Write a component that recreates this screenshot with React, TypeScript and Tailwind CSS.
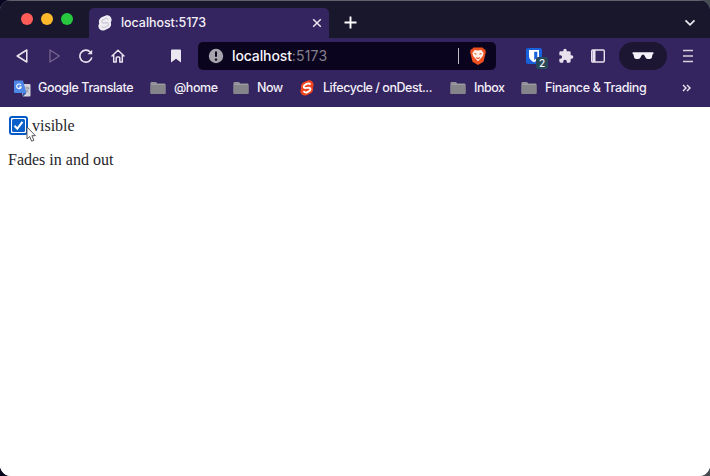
import React from 'react';

const ui = "font-['Inter','Liberation_Sans',sans-serif] font-medium";

function Svelte({ bg, fg, line }: { bg: string; fg: string; line: number }) {
  return (
    <svg width="14" height="16" viewBox="0 0 14 16" className="shrink-0">
      <path d="M4.2 2.1 7.8.6C10.6-.4 13.8 1.900 13.600 5c0 1-.4 1.700-.8 2.400.9 2.500-.1 5-2.500 6.200L6.600 15.200C3.600 16.600.2 14.300.4 11c0-1 .3-1.800.8-2.500C.2 5.900 1.500 3.300 4.200 2.100Z" fill={bg} />
      <path d="M10.400 4.700C9.600 3.100 7.900 3.200 6.800 3.900L4.500 5.300C3.200 6.200 3.500 8 5.100 8.100l3.600-.5c2 .1 2.300 2.100.9 3.100L7.400 12.100c-1.300.8-3.100.5-3.700-1.100" fill="none" stroke={fg} strokeWidth={line} />
    </svg>
  );
}

function Folder() {
  return (
    <svg width="16" height="14" viewBox="0 0 16 14" className="shrink-0">
      <path d="M.5 2Q.5 1 1.500 1H6l1.300 1.500h7.200q1 0 1 1v8.500q0 1-1 1h-13q-1 0-1-1Z" fill="#929198" />
      <path d="M.5 4h15v8q0 1-1 1h-13q-1 0-1-1Z" fill="#85848a" />
      <path d="M1 3.500h14" stroke="#a5a4aa" strokeWidth=".6" />
    </svg>
  );
}

function TabStrip() {
  return (
    <div className="flex h-[38px] border-t border-[#62606d] bg-[#19172b]">
      <div className="ml-[21px] mt-3 flex w-[68px] gap-2">
        <span className="size-3 rounded-full bg-[#ff5c58]" />
        <span className="size-3 rounded-full bg-[#fdb92c]" />
        <span className="size-3 rounded-full bg-[#27c840]" />
      </div>
      <div className="mt-[7px] flex h-[30px] w-[240px] items-center rounded-t-[5px] bg-[#34245f] pl-[9px] pr-[7px]">
        <Svelte bg="#efedf3" fg="#cbc7d3" line={1.1} />
        <span className="ml-[9px] w-[100px] whitespace-nowrap text-[12.5px] leading-4 tracking-[-0.06px] text-[#f2eff8]">localhost:5173</span>
        <svg className="ml-auto" width="10" height="10" viewBox="0 0 10 10" stroke="#e9e6f0" strokeWidth="1.500">
          <path d="m1.200 1.200 7.600 7.600m0-7.600L1.200 8.800" />
        </svg>
      </div>
      <svg className="ml-[15px] mt-[15px]" width="13" height="13" viewBox="0 0 13 13" stroke="#fff" strokeWidth="1.900">
        <path d="M6.500.5v12M.5 6.500h12" />
      </svg>
      <svg className="ml-auto mr-[14px] mt-[18px]" width="12" height="8" viewBox="0 0 12 8" fill="none" stroke="#eeeaf4" strokeWidth="1.700">
        <path d="m1.500 1.300 4.500 4.500 4.500-4.500" />
      </svg>
    </div>
  );
}

function Toolbar() {
  return (
    <div className="flex h-9 items-center">
      <svg className="ml-[16px]" width="12" height="14" viewBox="0 0 12 14" fill="none" stroke="#e9e5ef" strokeWidth="1.500" strokeLinejoin="round">
        <path d="M10.800 1v12L1.200 7Z" />
      </svg>
      <svg className="ml-[21px]" width="12" height="14" viewBox="0 0 12 14" fill="none" stroke="#746790" strokeWidth="1.300" strokeLinejoin="round">
        <path d="M1 1v12l9.300-6Z" />
      </svg>
      <svg className="ml-[18px]" width="14" height="14" viewBox="0 0 14 14" fill="none" stroke="#e9e5ef" strokeWidth="1.600">
        <path d="M12.800 8.300A6 6 0 1 1 11.300 3" />
        <path d="M8.500 5.200h4.700V.8Z" fill="#e9e5ef" stroke="none" />
      </svg>
      <svg className="ml-[18px]" width="14" height="14" viewBox="0 0 14 14" fill="none" stroke="#e9e5ef" strokeWidth="1.500" strokeLinejoin="round" strokeLinecap="round">
        <path d="m1 7 6-5.800L13 7M2.700 6v7h2.500V9q0-1 1-1h1.600q1 0 1 1v4h2.500V6" />
      </svg>
      <svg className="ml-[46px]" width="10" height="14" viewBox="0 0 10 14" fill="#ece8f2">
        <path d="M0 1.500Q0 .5 1 .5h8q1 0 1 1v12L5 9.800 0 13.500Z" />
      </svg>
      <div className="ml-[17px] flex h-[28px] w-[298px] items-center rounded-[5px] bg-[#0b041e] pl-[10px] pr-[9px]">
        <svg width="16" height="16" viewBox="0 0 16 16">
          <circle cx="8" cy="8" r="7.200" fill="#a6a4ad" />
          <path d="M8 3.500v5.300" stroke="#0b041e" strokeWidth="2" />
          <circle cx="8" cy="11.600" r="1.200" fill="#0b041e" />
        </svg>
        <span className="ml-2 w-[120px] whitespace-nowrap text-[14px] leading-5 tracking-[-0.12px] text-[#f7f5fc]">
          localhost<span className="font-normal tracking-[0.2px] text-[#85808f]">:5173</span>
        </span>
        <span className="ml-auto mr-[10px] h-4 w-px bg-[#bfbcc7]" />
        <svg width="18" height="20" viewBox="0 0 18 20">
          <path d="M4.500 1.500h9l1.300 1.500 1.500.5.500 3-.6 2.300-1.700 7L9 19l-5.500-3.200-1.700-7-.6-2.300.5-3L3.200 3Z" fill="#f05020" />
          <path d="M5.800 4 9 4.400l3.200-.4 2.400 3-.8 3-2.400 2.800L9 15.200l-2.400-2.400L4.200 10l-.8-3Z" fill="#fff2eb" />
          <path d="m5.500 7.600 2 .7M12.500 7.600l-2 .7M7.200 11.500 9 12.600l1.800-1.100" stroke="#e95127" strokeWidth="1.100" fill="none" />
        </svg>
      </div>
      <div className="relative ml-[30px] h-4 w-4">
        <svg width="16" height="16" viewBox="0 0 16 16">
          <rect width="16" height="16" rx="2" fill="#1761dc" />
          <path d="M3 2h10v6.500c0 2.500-2.500 4.500-5 5.700-2.500-1.200-5-3.200-5-5.700Z" fill="#fff" />
          <path d="M8.200 3.700h3.100v4.800c0 1.400-1.600 2.700-3.100 3.600Z" fill="#1761dc" />
        </svg>
        <span className="absolute left-[10px] top-[9px] flex h-3 w-3 items-center justify-center rounded-[2px] bg-[#28495a] text-[10px] leading-none text-white">2</span>
      </div>
      <svg className="ml-4" width="16" height="16" viewBox="0 0 24 24" fill="#e7e2ed">
        <path d="M20.500 11H19V7a2 2 0 0 0-2-2h-4V3.500a2.500 2.500 0 0 0-5 0V5H4a2 2 0 0 0-2 2v3.800h1.500a2.700 2.700 0 0 1 0 5.400H2V20a2 2 0 0 0 2 2h3.800v-1.500a2.700 2.700 0 0 1 5.400 0V22H17a2 2 0 0 0 2-2v-4h1.500a2.500 2.500 0 0 0 0-5Z" />
      </svg>
      <svg className="ml-[17px]" width="14" height="14" viewBox="0 0 14 14" fill="none" stroke="#e7e2ed">
        <rect x=".7" y="1" width="12.600" height="12" rx="1" strokeWidth="1.400" />
        <path d="M3 1v12" strokeWidth="3" />
      </svg>
      <div className="ml-[14px] flex h-[28px] w-12 items-center justify-center rounded-full bg-[#1d1633]">
        <svg width="22" height="10" viewBox="0 0 22 10" fill="#f5f1fa">
          <path d="M.7 1.200h20.600l.2 1.500-1 .7-.7 3.300c-.4 1.700-5 1.900-6 .4L12 3.700h-2L8.200 7.100c-1 1.500-5.600 1.300-6-.4l-.7-3.300-1-.7Z" />
        </svg>
      </div>
      <svg className="ml-[15px]" width="12" height="14" viewBox="0 0 12 14" stroke="#d7d2df" strokeWidth="1.700">
        <path d="M1 1.500h10M1 7h10M1 12.500h10" />
      </svg>
    </div>
  );
}

function Label({ children, className }: { children: React.ReactNode; className: string }) {
  return <span className={`shrink-0 whitespace-nowrap text-[12.5px] leading-4 text-[#f2eef8] ${className}`}>{children}</span>;
}

function Bookmarks() {
  return (
    <div className="flex h-[33px] items-start pt-[6px]">
      <div className="flex h-4 w-full items-center">
        <svg className="ml-[14px] shrink-0" width="17" height="17" viewBox="0 0 17 17">
          <path d="M6 4h9.500q1 0 1 1v10.500q0 1-1 1H9Z" fill="#d5d4dc" />
          <path d="M1 .5h8L12.500 13H1q-1 0-1-1V1.500q0-1 1-1Z" fill="#4d88e9" />
          <path d="M7 5.200A2.300 2.300 0 1 0 7.200 7H5" stroke="#fff" strokeWidth="1.100" fill="none" />
          <path d="M11 8h4.500M13 6.700V8m1.500 0c-.4 2-1.500 3.200-2.500 4m0-2.500c.8 1.300 1.600 2.100 2.800 2.800" stroke="#8b8a98" strokeWidth=".8" fill="none" />
          <path d="m9 13 3.500 0L9 16.500Z" fill="#3458a8" />
        </svg>
        <Label className="ml-[7px] w-[112px] tracking-[-0.38px]">Google Translate</Label>
        <Folder /><Label className="ml-2 w-[59px] tracking-[-0.42px]">@home</Label>
        <Folder /><Label className="ml-2 w-[43px] tracking-[-0.5px]">Now</Label>
        <Svelte bg="#f04421" fg="#fff" line={1.9} /><Label className="ml-[9px] w-[127px] tracking-[-0.46px]">Lifecycle / onDest...</Label>
        <Folder /><Label className="ml-2 w-[47px] tracking-[-0.5px]">Inbox</Label>
        <Folder /><Label className="ml-2 tracking-[-0.36px]">Finance &amp; Trading</Label>
        <svg className="ml-auto mr-[19px]" width="9" height="8" viewBox="0 0 9 8" stroke="#eeeaf4" strokeWidth="1.400" fill="none">
          <path d="m1 1 3 3-3 3m4-6 3 3-3 3" />
        </svg>
      </div>
    </div>
  );
}

export default function App() {
  return (
    <div className="h-[476px] w-[710px] overflow-hidden bg-[linear-gradient(90deg,#08051e_50%,#454d50_50%)]">
      <div className="flex h-full flex-col overflow-hidden rounded-[11px] bg-white">
        <header className={`h-[107px] shrink-0 bg-[#34245f] ${ui}`}>
          <TabStrip />
          <Toolbar />
          <Bookmarks />
        </header>
        <main className="relative flex-1 bg-white font-['Liberation_Serif',serif] text-[16px] leading-[18px] text-[#26242a]">
          <label className="flex h-[36px] items-center pl-[9px]">
            <span className="flex size-[19px] items-center justify-center rounded-[3px] border-2 border-[#0759c5] bg-white">
              <svg width="13" height="13" viewBox="0 0 13 13">
                <rect width="13" height="13" rx="1.500" fill="#0960c9" />
                <path d="m2.500 6.700 2.800 2.900 5.200-6.800" stroke="#fff" strokeWidth="2" fill="none" />
              </svg>
            </span>
            <span className="ml-1 pt-0.5">visible</span>
          </label>
          <p className="ml-2 mt-[8px]">Fades in and out</p>
          <svg className="absolute left-[26px] top-[19px]" width="10" height="17" viewBox="0 0 10 17">
            <path d="M1 1v12l2.700-2.500 2 4.700 2.200-1-2-4.500h3.500Z" fill="#fff" stroke="#464349" strokeWidth=".9" />
          </svg>
        </main>
      </div>
    </div>
  );
}
